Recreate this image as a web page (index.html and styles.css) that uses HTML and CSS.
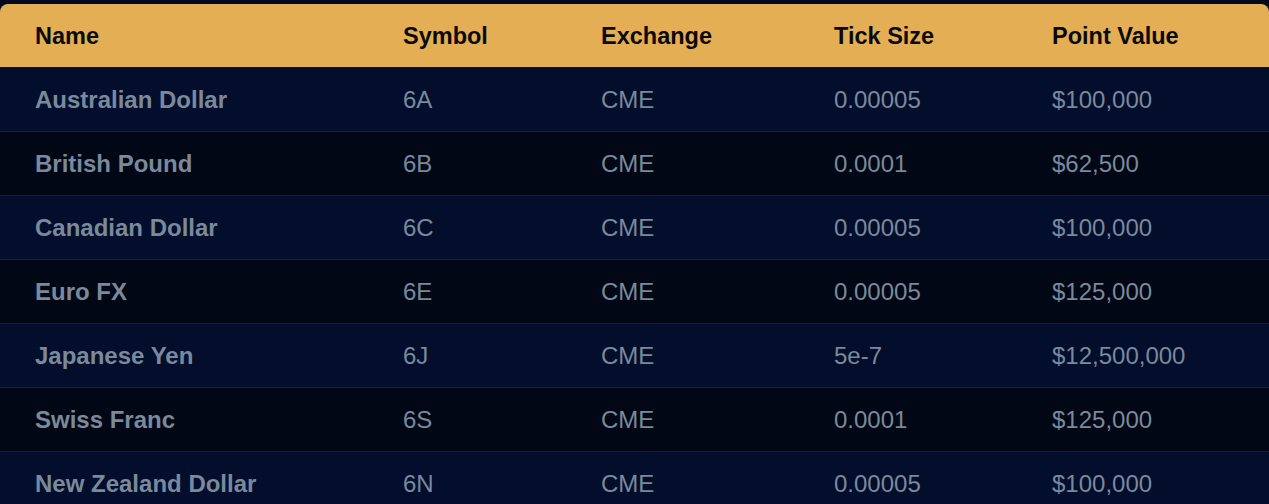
FILE: index.html
```html
<!DOCTYPE html>
<html lang="en">

<head>
    <meta charset="UTF-8">
    <title>Currency Futures</title>
    <link rel="stylesheet" href="styles.css">
</head>

<body>
    <div class="wrap">
        <table class="specs">
            <thead>
                <tr>
                    <th class="c-name">Name</th>
                    <th class="c-sym">Symbol</th>
                    <th class="c-ex">Exchange</th>
                    <th class="c-tick">Tick Size</th>
                    <th class="c-pv">Point Value</th>
                </tr>
            </thead>
            <tbody>
                <tr>
                    <td class="name">Australian Dollar</td>
                    <td>6A</td>
                    <td>CME</td>
                    <td>0.00005</td>
                    <td>$100,000</td>
                </tr>
                <tr>
                    <td class="name">British Pound</td>
                    <td>6B</td>
                    <td>CME</td>
                    <td>0.0001</td>
                    <td>$62,500</td>
                </tr>
                <tr>
                    <td class="name">Canadian Dollar</td>
                    <td>6C</td>
                    <td>CME</td>
                    <td>0.00005</td>
                    <td>$100,000</td>
                </tr>
                <tr>
                    <td class="name">Euro FX</td>
                    <td>6E</td>
                    <td>CME</td>
                    <td>0.00005</td>
                    <td>$125,000</td>
                </tr>
                <tr>
                    <td class="name">Japanese Yen</td>
                    <td>6J</td>
                    <td>CME</td>
                    <td>5e-7</td>
                    <td>$12,500,000</td>
                </tr>
                <tr>
                    <td class="name">Swiss Franc</td>
                    <td>6S</td>
                    <td>CME</td>
                    <td>0.0001</td>
                    <td>$125,000</td>
                </tr>
                <tr>
                    <td class="name">New Zealand Dollar</td>
                    <td>6N</td>
                    <td>CME</td>
                    <td>0.00005</td>
                    <td>$100,000</td>
                </tr>
            </tbody>
        </table>
    </div>
</body>

</html>
```

FILE: styles.css
```css
* {
    margin: 0;
    padding: 0;
    box-sizing: border-box;
}

body {
    background-color: #030a1e;
    font-family: "Liberation Sans", Arial, sans-serif;
    overflow: hidden;
}

.wrap {
    padding-top: 4px;
}

table.specs {
    width: 1269px;
    border-collapse: separate;
    border-spacing: 0;
    table-layout: fixed;
    font-size: 24px;
}

.specs th {
    height: 64px;
    background-color: #e4ae54;
    color: #0a0a0a;
    font-size: 23.5px;
    font-weight: bold;
    text-align: left;
    padding: 1px 0 0 35px;
    border-bottom: 1px solid #0c1428;
}

.specs th:first-child {
    border-top-left-radius: 8px;
}

.specs th:last-child {
    border-top-right-radius: 8px;
}

.specs .c-name { width: 368px; }
.specs .c-sym { width: 198px; }
.specs .c-ex { width: 233px; }
.specs .c-tick { width: 218px; }

.specs td {
    height: 64px;
    padding: 1px 0 0 35px;
    color: #7a899b;
    border-bottom: 1px solid #18213a;
    white-space: nowrap;
}

.specs tbody tr:nth-child(odd) td {
    background-color: #020e2c;
}

.specs tbody tr:nth-child(even) td {
    background-color: #010714;
}

.specs td.name {
    font-weight: bold;
}
```
